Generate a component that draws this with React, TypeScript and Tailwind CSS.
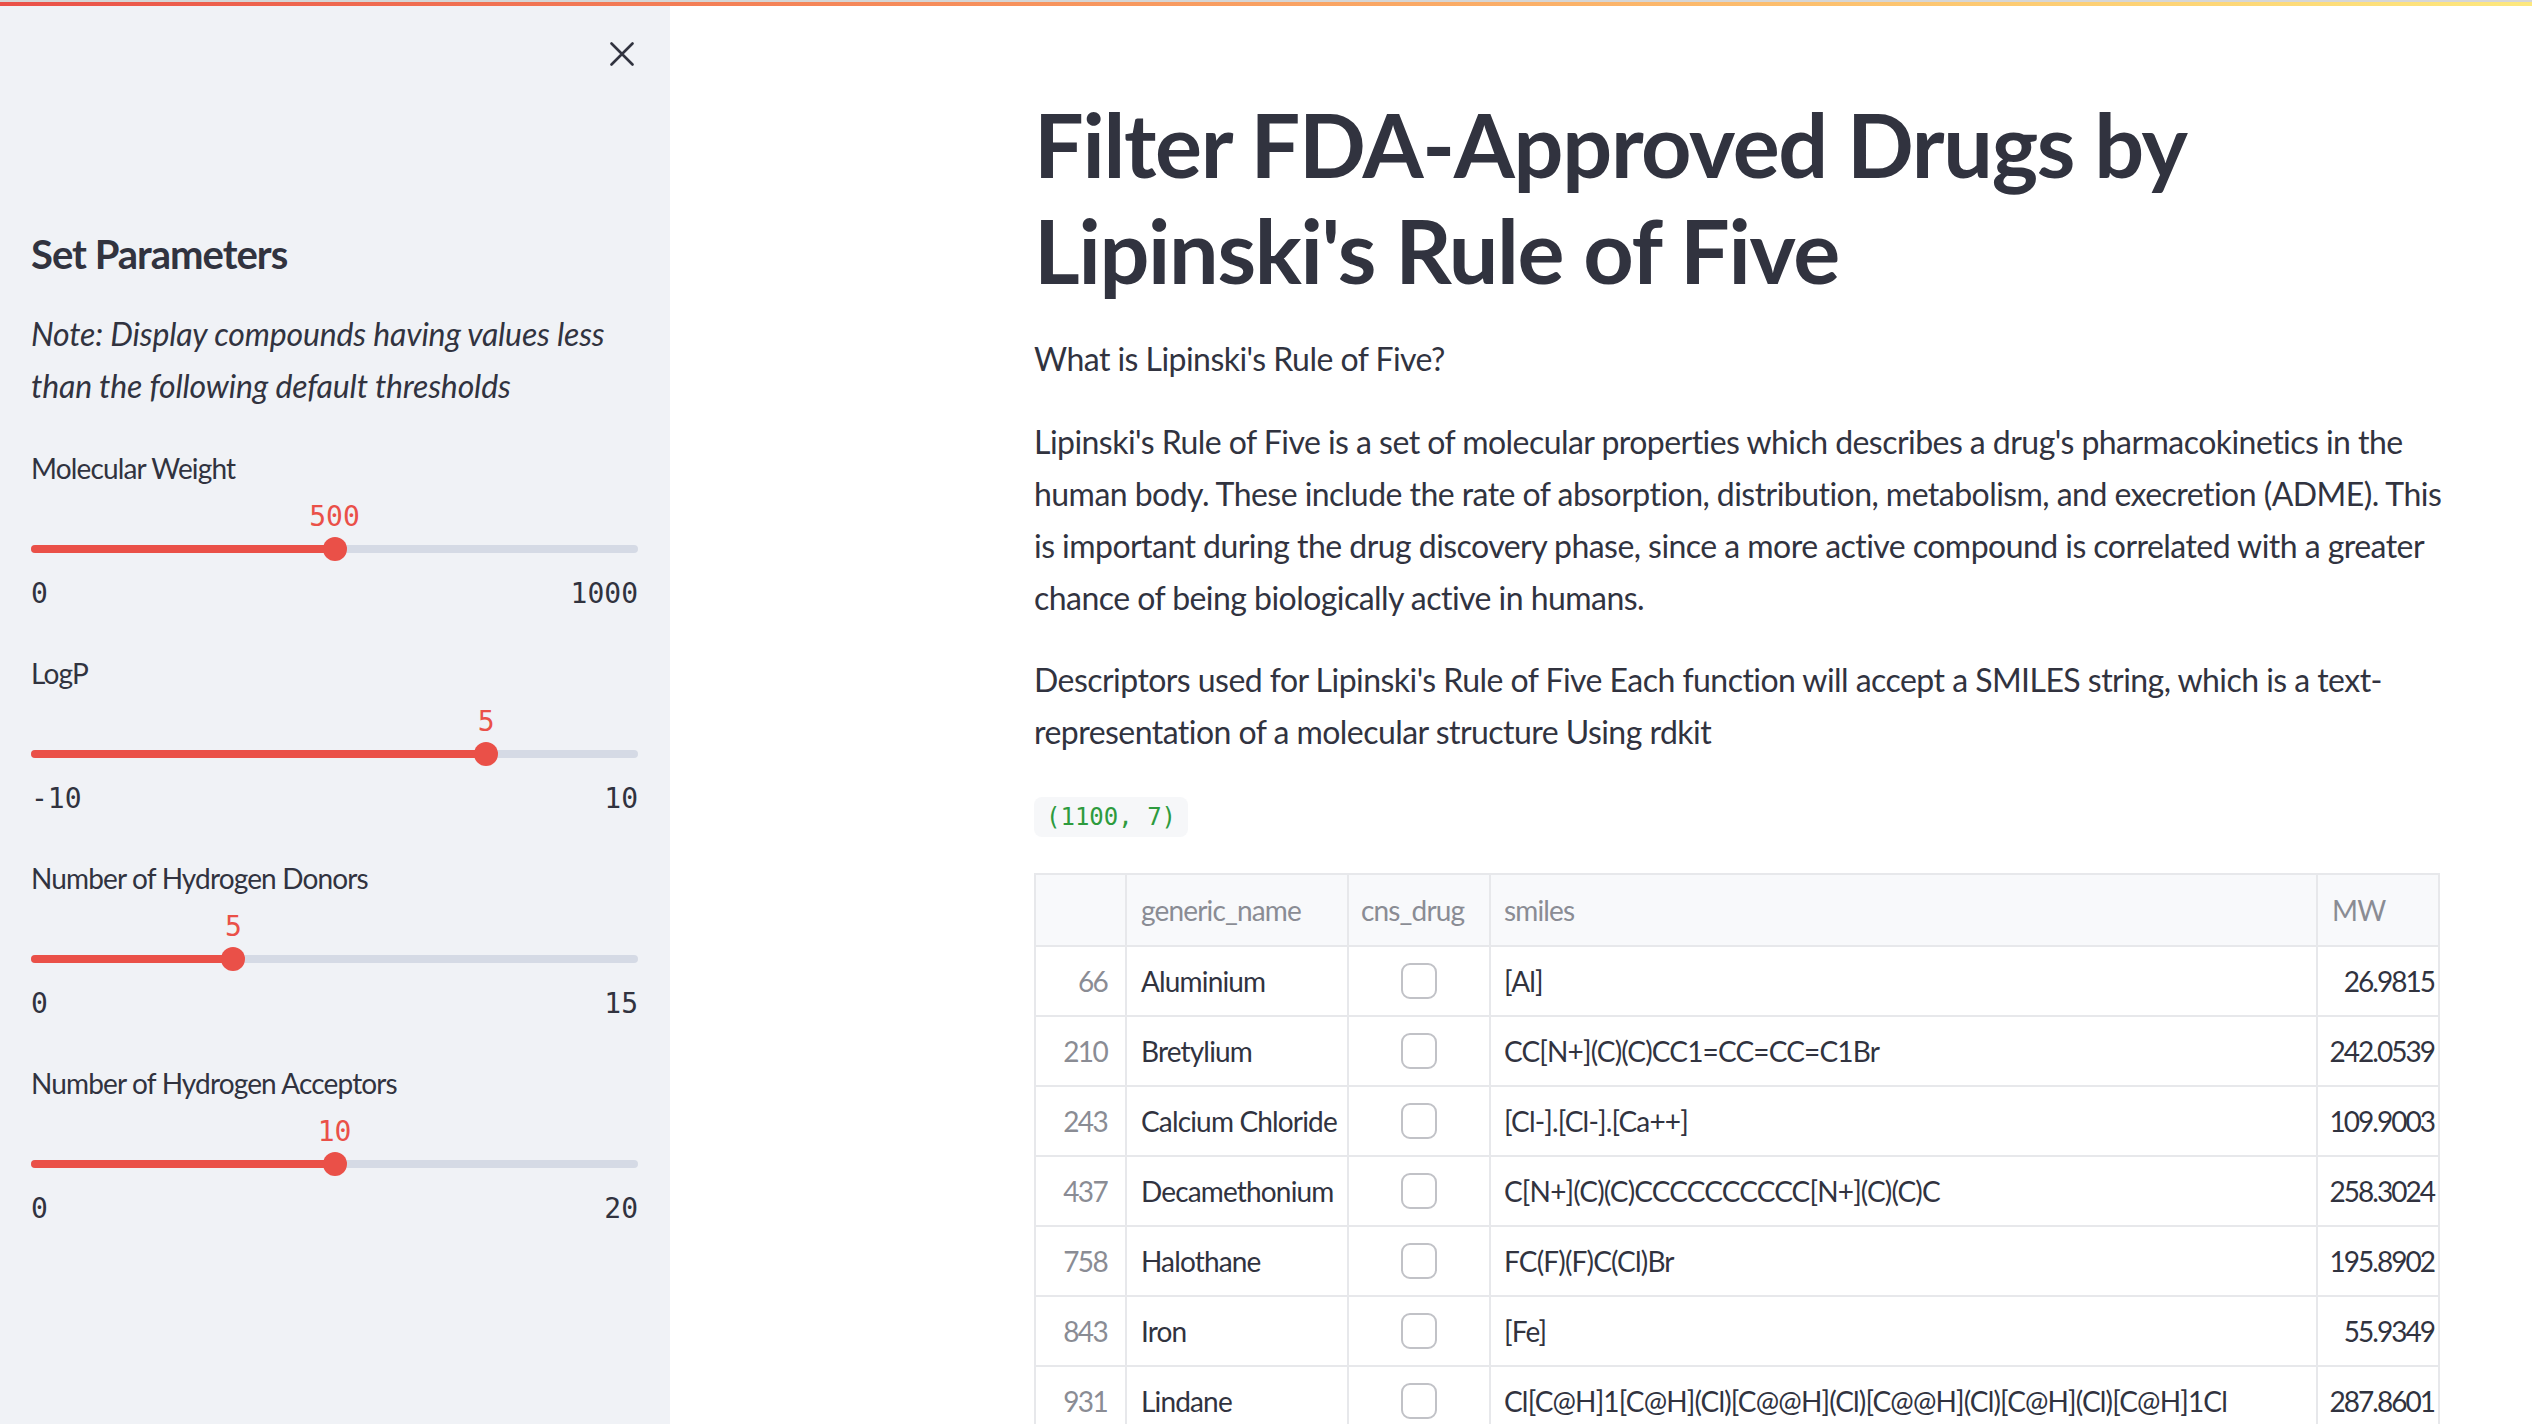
import React from "react";

const sliders = [
  { label: "Molecular Weight", min: 0, max: 1000, value: 500 },
  { label: "LogP", min: -10, max: 10, value: 5 },
  { label: "Number of Hydrogen Donors", min: 0, max: 15, value: 5 },
  { label: "Number of Hydrogen Acceptors", min: 0, max: 20, value: 10 },
];

const rows = [
  { idx: 66, name: "Aluminium", smiles: "[Al]", mw: "26.9815" },
  { idx: 210, name: "Bretylium", smiles: "CC[N+](C)(C)CC1=CC=CC=C1Br", mw: "242.0539" },
  { idx: 243, name: "Calcium Chloride", smiles: "[Cl-].[Cl-].[Ca++]", mw: "109.9003" },
  { idx: 437, name: "Decamethonium", smiles: "C[N+](C)(C)CCCCCCCCCC[N+](C)(C)C", mw: "258.3024" },
  { idx: 758, name: "Halothane", smiles: "FC(F)(F)C(Cl)Br", mw: "195.8902" },
  { idx: 843, name: "Iron", smiles: "[Fe]", mw: "55.9349" },
  { idx: 931, name: "Lindane", smiles: "Cl[C@H]1[C@H](Cl)[C@@H](Cl)[C@@H](Cl)[C@H](Cl)[C@H]1Cl", mw: "287.8601" },
];

function Slider({ label, min, max, value }: { label: string; min: number; max: number; value: number }) {
  const pct = ((value - min) / (max - min)) * 100;
  return (
    <div className="flex flex-col">
      <div className="h-[40px] text-[28px] leading-[40px] tracking-[-0.03em] text-[#31333f]">{label}</div>
      {/* value bubble */}
      <div className="relative mt-[11px] h-[36px]">
        <span
          className="absolute top-0 -translate-x-1/2 font-['DejaVu_Sans_Mono',monospace] text-[28px] leading-[36px] text-[#ea5048]"
          style={{ left: `${pct}%` }}
        >
          {value}
        </span>
      </div>
      {/* track */}
      <div className="relative h-[28px]">
        <div className="absolute left-0 right-0 top-[10px] h-[8px] rounded-full bg-[#d5dae5]" />
        <div className="absolute left-0 top-[10px] h-[8px] rounded-full bg-[#ea5048]" style={{ width: `${pct}%` }} />
        <div
          className="absolute top-[2px] h-[24px] w-[24px] -translate-x-1/2 rounded-full bg-[#ea5048]"
          style={{ left: `${pct}%` }}
        />
      </div>
      <div className="mt-[13px] flex h-[36px] justify-between font-['DejaVu_Sans_Mono',monospace] text-[28px] leading-[36px] text-[#31333f]">
        <span>{min}</span>
        <span>{max}</span>
      </div>
    </div>
  );
}

function Sidebar() {
  return (
    <aside className="flex h-full w-[670px] shrink-0 flex-col bg-[#f0f2f6] pl-[31px] pr-[32px] pt-[42px]">
      <div className="flex justify-end pr-[4px]">
        <svg width="24" height="24" viewBox="0 0 24 24" className="text-[#31333f]">
          <path d="M1.5 1.5L22.5 22.5M22.5 1.5L1.5 22.5" stroke="currentColor" strokeWidth="2.6" strokeLinecap="round" />
        </svg>
      </div>
      <h2 className="mt-[164px] text-[40px] font-bold leading-[48px] tracking-[-0.025em] text-[#31333f]">Set Parameters</h2>
      <p className="mt-[30px] text-[32px] italic leading-[52px] tracking-[-0.005em] text-[#31333f]">
        Note: Display compounds having values less
        <br />
        than the following default thresholds
      </p>
      <div className="mt-[36px] flex flex-col gap-[41px]">
        {sliders.map((s) => (
          <Slider key={s.label} {...s} />
        ))}
      </div>
    </aside>
  );
}

function Checkbox() {
  return <div className="h-[36px] w-[36px] rounded-[9px] border-2 border-[#c1c2c7] bg-white" />;
}

function DataTable() {
  return (
    <div className="w-[1406px] overflow-hidden border-r-2 border-t-2 border-[#e7e8eb] text-[28px] tracking-[-0.03em]">
      {/* header */}
      <div className="flex h-[72px] w-max border-b-2 border-[#e7e8eb] bg-[#f8f9fb] text-[#8a8c94]">
        <div className="w-[91px] border-l-2 border-[#e7e8eb]" />
        <div className="flex w-[222px] items-center border-l-2 border-[#e7e8eb] pl-[14px]">generic_name</div>
        <div className="flex w-[142px] items-center border-l-2 border-[#e7e8eb] pl-[12px]">cns_drug</div>
        <div className="flex w-[827px] items-center border-l-2 border-[#e7e8eb] pl-[13px]">smiles</div>
        <div className="flex w-[134px] items-center border-l-2 border-[#e7e8eb] pl-[14px]">MW</div>
      </div>
      {rows.map((r) => (
        <div key={r.idx} className="flex h-[70px] w-max border-b-2 border-[#e7e8eb] bg-white text-[#31333f]">
          <div className="flex w-[91px] items-center justify-end border-l-2 border-[#e7e8eb] pr-[18px] tracking-[-0.06em] text-[#8a8c94]">
            {r.idx}
          </div>
          <div className="flex w-[222px] items-center whitespace-nowrap border-l-2 border-[#e7e8eb] pl-[14px]">{r.name}</div>
          <div className="flex w-[142px] items-center justify-center border-l-2 border-[#e7e8eb]">
            <Checkbox />
          </div>
          <div className="flex w-[827px] items-center whitespace-nowrap border-l-2 border-[#e7e8eb] pl-[13px]">{r.smiles}</div>
          <div className="flex w-[134px] items-center justify-end border-l-2 border-[#e7e8eb] pr-[16px] tracking-[-0.07em]">
            {r.mw}
          </div>
        </div>
      ))}
    </div>
  );
}

export default function App() {
  return (
    <div className="relative flex h-[1424px] w-[2532px] overflow-hidden bg-white font-['Lato',sans-serif] text-[#31333f]">
      {/* decoration bar */}
      <div className="absolute left-0 right-0 top-0 z-10">
        <div className="h-[2px] bg-[#d6d6d6]" />
        <div className="h-[4px] bg-gradient-to-r from-[#ea5048] to-[#fde87e]" />
      </div>

      <Sidebar />

      <main className="flex flex-1 flex-col pl-[364px] pt-[91px]">
        <div className="flex w-[1406px] flex-col">
          <h1 className="text-[88px] font-bold leading-[106px] tracking-[-0.015em] text-[#31333f]">
            Filter FDA-Approved Drugs by
            <br />
            Lipinski's Rule of Five
          </h1>
          <div className="flex flex-col text-[32px] leading-[52px] tracking-[-0.017em]">
            <p className="mt-[30px]">What is Lipinski's Rule of Five?</p>
            <p className="mt-[31px] whitespace-nowrap">
              Lipinski's Rule of Five is a set of molecular properties which describes a drug's pharmacokinetics in the
              <br />
              human body. These include the rate of absorption, distribution, metabolism, and execretion (ADME). This
              <br />
              is important during the drug discovery phase, since a more active compound is correlated with a greater
              <br />
              chance of being biologically active in humans.
            </p>
            <p className="mt-[30px] whitespace-nowrap">
              Descriptors used for Lipinski's Rule of Five Each function will accept a SMILES string, which is a text-
              <br />
              representation of a molecular structure Using rdkit
            </p>
          </div>
          <div className="mt-[39px] flex">
            <span className="rounded-[8px] bg-[#f6f7f9] px-[12px] font-['DejaVu_Sans_Mono',monospace] text-[24px] leading-[40px] text-[#2e9b3e]">
              (1100, 7)
            </span>
          </div>
          <div className="mt-[36px]">
            <DataTable />
          </div>
        </div>
      </main>
    </div>
  );
}
